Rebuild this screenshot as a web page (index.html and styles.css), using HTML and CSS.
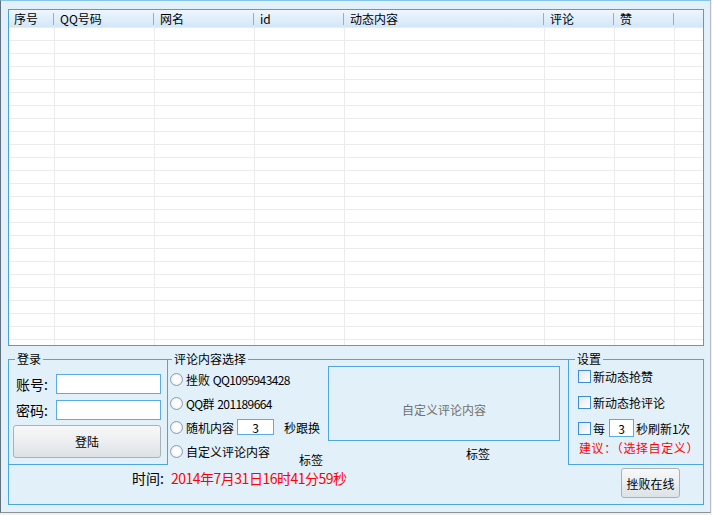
FILE: index.html
```html
<!DOCTYPE html>
<html lang="zh-CN">
<head>
<meta charset="utf-8">
<link rel="stylesheet" href="styles.css">
</head>
<body>
<div class="window">
  <div class="list">
    <div class="list-head">
      <div class="hc c1">序号</div>
      <div class="hc c2">QQ号码</div>
      <div class="hc c3">网名</div>
      <div class="hc c4">id</div>
      <div class="hc c5">动态内容</div>
      <div class="hc c6">评论</div>
      <div class="hc c7">赞</div>
      <div class="hc c8"></div>
    </div>
    <div class="list-body">
      <div class="bc c1"></div>
      <div class="bc c2"></div>
      <div class="bc c3"></div>
      <div class="bc c4"></div>
      <div class="bc c5"></div>
      <div class="bc c6"></div>
      <div class="bc c7"></div>
      <div class="bc c8"></div>
    </div>
  </div>

  <div class="panel">
    <div class="panel-top">
      <div class="group login">
        <div class="gtitle">登录</div>
        <div class="frow first"><span class="flabel">账号:</span><span class="field"></span></div>
        <div class="frow"><span class="flabel">密码:</span><span class="field"></span></div>
        <div class="btn login-btn">登陆</div>
      </div>

      <div class="comment">
        <div class="gtitle ctitle">评论内容选择</div>
        <div class="comment-body">
          <div class="radios">
            <div class="rrow"><span class="radio"></span><span>挫败 <span class="lat">QQ1095943428</span></span></div>
            <div class="rrow"><span class="radio"></span><span><span class="lat">QQ</span>群 <span class="lat">201189664</span></span></div>
            <div class="rrow"><span class="radio"></span><span>随机内容</span><span class="num num-rand">3</span><span class="swap">秒跟换</span></div>
            <div class="rrow"><span class="radio"></span><span>自定义评论内容</span><span class="tag1">标签</span></div>
          </div>
          <div class="custom-col">
            <div class="custom-box">自定义评论内容</div>
            <div class="tag2">标签</div>
          </div>
        </div>
      </div>

      <div class="group settings">
        <div class="gtitle">设置</div>
        <div class="crow first"><span class="check"></span><span>新动态抢赞</span></div>
        <div class="crow"><span class="check"></span><span>新动态抢评论</span></div>
        <div class="crow"><span class="check"></span><span>每</span><span class="num num-ref">3</span><span class="per">秒刷新<span class="lat">1</span>次</span></div>
        <div class="advice">建议：（选择自定义）</div>
      </div>
    </div>

    <div class="panel-bottom">
      <div class="time"><span class="time-label">时间:</span><span class="time-val">2014年7月31日16时41分59秒</span></div>
      <div class="btn online-btn">挫败在线</div>
    </div>
  </div>
</div>
</body>
</html>
```

FILE: styles.css
```css
html {
  background: #eef1f4;
}

body {
  margin: 0;
  font-family: "Noto Sans CJK SC", "Liberation Sans", sans-serif;
  font-size: 12px;
  color: #000;
}

.window {
  width: 696px;
  height: 496px;
  padding: 8px 6px 7px 7px;
  border-top: 1px solid #86c4ea;
  border-left: 1px solid #62707e;
  border-right: 1px solid #b5bec8;
  border-bottom: 1px solid #8b9197;
  background: #e2f1f9;
  display: flex;
  flex-direction: column;
}

/* ---------- list view ---------- */
.list {
  box-sizing: border-box;
  height: 337px;
  border: 1px solid #4ca0d8;
  background: #fff;
  display: flex;
  flex-direction: column;
}

.list-head {
  display: flex;
  height: 17px;
  background: linear-gradient(#eef6fd, #d3e7f8);
}

.hc {
  box-sizing: border-box;
  padding-left: 5px;
  line-height: 17px;
  white-space: nowrap;
  overflow: hidden;
  background: linear-gradient(#7db6e2, #7db6e2) no-repeat right 1px center / 1px 12px;
}

.hc.c8 {
  background: none;
}

.c1 { width: 46px; }
.c2 { width: 100px; }
.c3 { width: 100px; }
.c4 { width: 90px; }
.c5 { width: 200px; }
.c6 { width: 70px; }
.c7 { width: 60px; }
.c8 { flex: 1; }

.list-body {
  flex: 1;
  display: flex;
  background: repeating-linear-gradient(to bottom, #ececec 0 1px, #fff 1px 13px);
}

.bc {
  box-sizing: border-box;
  border-right: 1px solid #ececec;
}

.bc.c8 {
  border-right: 0;
}

/* ---------- bottom panel ---------- */
.panel {
  margin-top: 13px;
  box-sizing: border-box;
  height: 146px;
  border: 1px solid #4aa6de;
  display: flex;
  flex-direction: column;
}

.panel-top {
  display: flex;
  height: 106px;
  margin: -1px -1px 0;
}

.group {
  box-sizing: border-box;
  border: 1px solid #4aa6de;
  display: flex;
  flex-direction: column;
}

.gtitle {
  align-self: flex-start;
  height: 14px;
  line-height: 14px;
  margin: -8px 0 0 6px;
  padding: 0 2px;
  background: #e2f1f9;
  white-space: nowrap;
}

.ctitle {
  margin: -7px 0 0 4px;
}

/* login */
.login {
  width: 160px;
}

.frow {
  display: flex;
  align-items: center;
  height: 20px;
  margin-top: 6px;
}

.frow.first {
  margin-top: 8px;
}

.flabel {
  width: 40px;
  margin-left: 7px;
  font-size: 14px;
  line-height: 14px;
}

.field {
  box-sizing: border-box;
  width: 105px;
  height: 20px;
  border: 1px solid #59ace2;
  background: #fff;
}

.btn {
  box-sizing: border-box;
  border: 1px solid #a9b1b9;
  border-radius: 3px;
  background: linear-gradient(#f8f8f8, #eceef0 50%, #dde2e6);
  display: flex;
  align-items: center;
  justify-content: center;
  white-space: nowrap;
}

.login-btn {
  width: 148px;
  height: 33px;
  margin: 5px 0 0 4px;
}

/* comment choice */
.comment {
  width: 400px;
  display: flex;
  flex-direction: column;
}

.comment-body {
  flex: 1;
  display: flex;
}

.radios {
  width: 158px;
  margin-left: 2px;
  padding-top: 1px;
  display: flex;
  flex-direction: column;
}

.rrow {
  height: 24px;
  display: flex;
  align-items: center;
  white-space: nowrap;
}

.radio {
  box-sizing: border-box;
  width: 13px;
  height: 13px;
  margin-right: 3px;
  border-radius: 50%;
  border: 1px solid #8a9db3;
  background: radial-gradient(circle, #fff 35%, #dde3ea);
  flex: none;
}

.lat {
  letter-spacing: -0.6px;
}

.num {
  box-sizing: border-box;
  border: 1px solid #59ace2;
  background: #fff;
  display: flex;
  align-items: center;
  justify-content: center;
  flex: none;
}

.num-rand {
  width: 37px;
  height: 16px;
  margin-left: 3px;
}

.swap {
  margin-left: 10px;
}

.tag1 {
  align-self: flex-end;
  line-height: 14px;
  margin: 0 5px -4px auto;
}

.custom-col {
  width: 232px;
  display: flex;
  flex-direction: column;
}

.custom-box {
  box-sizing: border-box;
  height: 75px;
  padding-top: 12px;
  border: 1px solid #4ea7de;
  display: flex;
  align-items: center;
  justify-content: center;
  color: #707070;
}

.tag2 {
  margin: 6px 0 0 138px;
  line-height: 14px;
}

/* settings */
.settings {
  width: 136px;
}

.crow {
  display: flex;
  align-items: center;
  height: 20px;
  margin: 6px 0 0 9px;
  white-space: nowrap;
}

.crow.first {
  margin-top: 0;
}

.check {
  box-sizing: border-box;
  width: 13px;
  height: 13px;
  margin-right: 2px;
  border: 1px solid #3d8ed0;
  background: linear-gradient(135deg, #e3e7ec, #fff);
  flex: none;
}

.num-ref {
  width: 25px;
  height: 18px;
  margin-left: 4px;
}

.per {
  margin-left: 2px;
}

.advice {
  margin: 3px 0 0 10px;
  line-height: 14px;
  color: #f00;
  letter-spacing: 0.6px;
  white-space: nowrap;
}

/* bottom row */
.panel-bottom {
  flex: 1;
  display: flex;
  align-items: flex-start;
}

.time {
  display: flex;
  margin: 6px 0 0 123px;
  font-size: 14px;
  line-height: 14px;
  white-space: nowrap;
}

.time-label {
  width: 39px;
}

.time-val {
  color: #f00;
  letter-spacing: -0.5px;
}

.online-btn {
  width: 59px;
  height: 30px;
  margin: 3px 23px 0 auto;
}
```
